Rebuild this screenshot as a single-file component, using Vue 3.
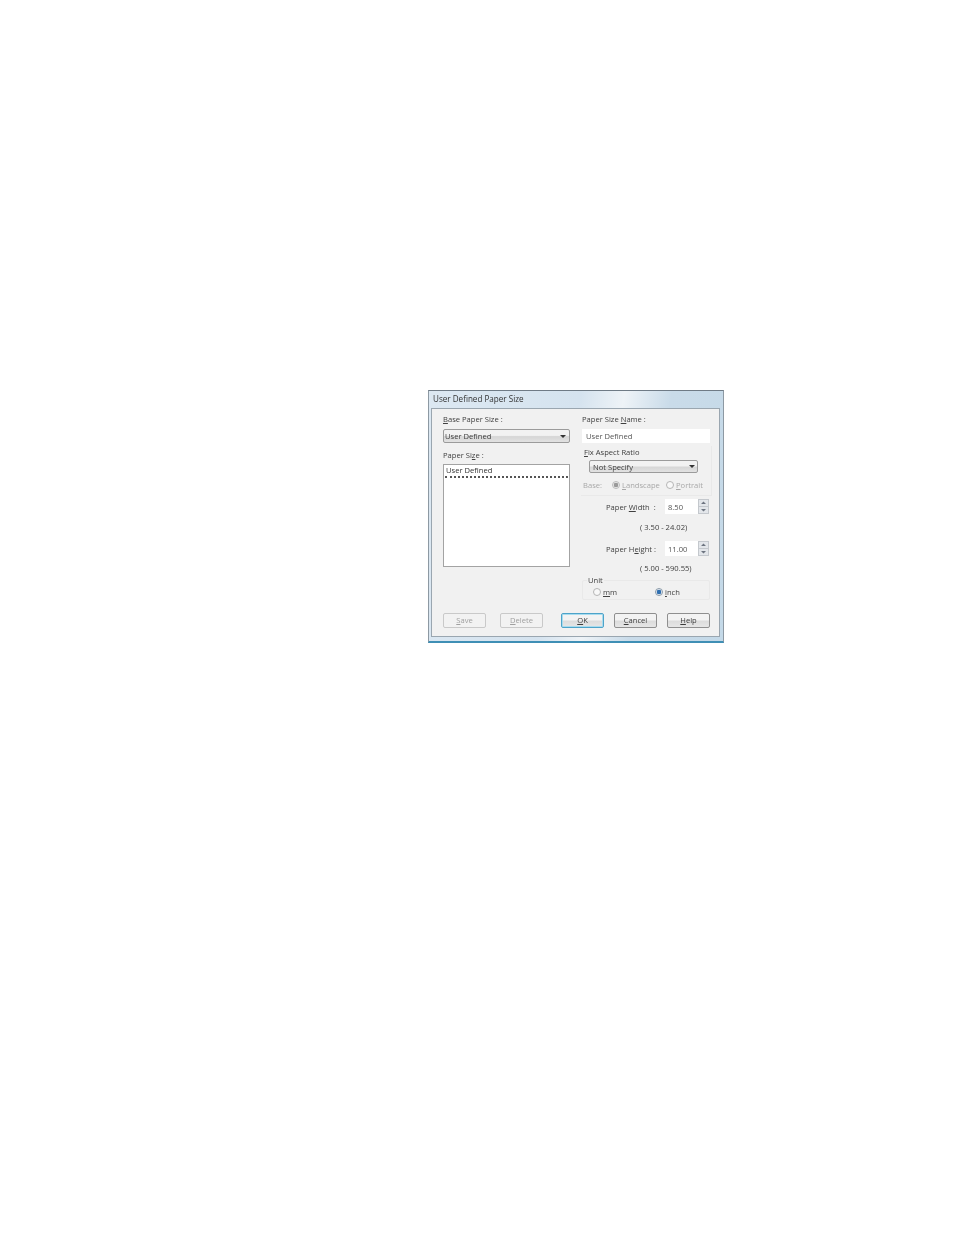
<script setup>
const leftButtons = [
  { key: "S", rest: "ave" },
  { key: "D", rest: "elete" },
];
const rightButtons = [
  { key: "O", rest: "K", main: true },
  { key: "C", rest: "ancel" },
  { key: "H", rest: "elp" },
];
</script>

<template>
  <div class="page">
    <div class="dialog">
      <div class="title">User Defined Paper Size</div>
      <div class="panel">
        <div class="columns">
          <div class="left">
            <div class="label"><u>B</u>ase Paper Size :</div>
            <div class="select base">
              <span>User Defined</span>
              <i class="arrow"></i>
            </div>
            <div class="label size-label">Paper Si<u>z</u>e :</div>
            <div class="listbox">
              <div class="list-item">User Defined</div>
            </div>
          </div>

          <div class="right">
            <div class="label">Paper Size <u>N</u>ame :</div>
            <div class="input name">User Defined</div>

            <div class="aspect">
              <div class="label legend"><u>F</u>ix Aspect Ratio</div>
              <div class="select ratio">
                <span>Not Specify</span>
                <i class="arrow"></i>
              </div>
              <div class="base-row">
                <span class="disabled base-text">Base:</span>
                <span class="radio-wrap disabled landscape">
                  <i class="radio on off"></i><span><u>L</u>andscape</span>
                </span>
                <span class="radio-wrap disabled">
                  <i class="radio off"></i><span><u>P</u>ortrait</span>
                </span>
              </div>
            </div>

            <div class="size-row width-row">
              <span class="size-name">Paper <u>W</u>idth &nbsp;:</span>
              <div class="input num">8.50</div>
              <div class="spin">
                <svg width="11" height="15" viewBox="0 0 11 15">
                  <rect x="0.5" y="0.5" width="10" height="7" fill="#e3e6ea" stroke="#c4c8cd" />
                  <rect x="0.5" y="7.5" width="10" height="7" fill="#e3e6ea" stroke="#c4c8cd" />
                  <path d="M5.5 2.5 8 5H3zM5.5 12.5 8 10H3z" fill="#6d7480" />
                </svg>
              </div>
            </div>
            <div class="range range-width">( 3.50 - 24.02)</div>

            <div class="size-row height-row">
              <span class="size-name">Paper H<u>e</u>ight :</span>
              <div class="input num">11.00</div>
              <div class="spin">
                <svg width="11" height="15" viewBox="0 0 11 15">
                  <rect x="0.5" y="0.5" width="10" height="7" fill="#e3e6ea" stroke="#c4c8cd" />
                  <rect x="0.5" y="7.5" width="10" height="7" fill="#e3e6ea" stroke="#c4c8cd" />
                  <path d="M5.5 2.5 8 5H3zM5.5 12.5 8 10H3z" fill="#6d7480" />
                </svg>
              </div>
            </div>
            <div class="range range-height">( 5.00 - 590.55)</div>

            <div class="unit">
              <div class="label unit-legend">Unit</div>
              <span class="radio-wrap mm">
                <i class="radio off"></i><span><u>m</u>m</span>
              </span>
              <span class="radio-wrap">
                <i class="radio on"></i><span><u>i</u>nch</span>
              </span>
            </div>
          </div>
        </div>

        <div class="buttons">
          <div class="group left-group">
            <button v-for="b in leftButtons" :key="b.key" class="btn" disabled>
              <u>{{ b.key }}</u>{{ b.rest }}
            </button>
          </div>
          <div class="group">
            <button v-for="b in rightButtons" :key="b.key" class="btn active" :class="{ main: b.main }">
              <u>{{ b.key }}</u>{{ b.rest }}
            </button>
          </div>
        </div>
      </div>
    </div>
  </div>
</template>

<style scoped>
.page {
  width: 954px;
  height: 1235px;
  padding: 390px 0 0 428px;
  box-sizing: border-box;
  background: #fff;
  font-family: "Open Sans", "Liberation Sans", sans-serif;
  font-size: 7.6px;
  color: #404040;
}
.dialog {
  width: 296px;
  height: 253px;
  box-sizing: border-box;
  padding: 0 3px 4px 2px;
  display: flex;
  flex-direction: column;
  border: 1px solid #8d99a3;
  border-top-color: #6f7b86;
  border-bottom: 2px solid #3f8fb5;
  background: linear-gradient(100deg, #dce8f2 0%, #d5e3ef 45%, #eef3f7 58%, #c9dbe9 72%, #c4d9e8 100%);
  filter: blur(0.5px);
}
.title {
  height: 17px;
  line-height: 16px;
  padding-left: 2px;
  font-size: 8.1px;
  color: #333;
}
.panel {
  flex: 1;
  padding: 4px 9px 8px 11px;
  display: flex;
  flex-direction: column;
  justify-content: space-between;
  background: #f1f1f1;
  border: 1px solid #9aa6b0;
}
.columns {
  display: flex;
  gap: 12px;
}
.left {
  width: 127px;
}
.right {
  width: 128px;
}
.label {
  height: 12px;
  line-height: 12px;
  white-space: nowrap;
}
.select {
  height: 12px;
  line-height: 12px;
  padding: 0 1px;
  display: flex;
  align-items: center;
  justify-content: space-between;
  border: 1px solid #9b9b9b;
  border-radius: 2px;
  background: linear-gradient(#f2f2f2 45%, #d6d6d6 55%, #e2e2e2);
  color: #3c3c3c;
}
.base {
  margin-top: 4px;
}
.arrow {
  width: 0;
  height: 0;
  margin-right: 2px;
  border: 3px solid transparent;
  border-top: 3px solid #333;
  border-bottom: 0;
}
.size-label {
  margin-top: 6px;
}
.listbox {
  height: 100px;
  margin-top: 3px;
  padding: 0 1px 1px;
  border: 1px solid #a3a3a3;
  background: #fff;
}
.list-item {
  height: 11px;
  line-height: 10px;
  padding-left: 1px;
  border-bottom: 2px dotted #555;
  color: #333;
}
.input {
  background: #fff;
  color: #555;
  line-height: 14px;
  height: 14px;
}
.name {
  margin-top: 4px;
  padding-left: 4px;
}
.aspect {
  height: 49px;
  margin: 3px -2px 0 -1px;
  padding: 0 0 0 8px;
  border: 1px solid #e9e9e9;
  border-top: 0;
  border-left: 0;
}
.legend {
  margin-left: -5px;
}
.ratio {
  width: 106px;
  box-sizing: content-box;
  height: 11px;
  margin-top: 2px;
  padding: 0 0 0 1px;
}
.ratio span {
  padding-left: 2px;
}
.base-row {
  display: flex;
  align-items: center;
  margin: 6px 0 0 -8px;
  height: 12px;
}
.disabled {
  color: #a8a8a8;
}
.base-text {
  width: 31px;
  padding-left: 2px;
  box-sizing: border-box;
}
.landscape {
  width: 54px;
}
.radio-wrap {
  display: inline-flex;
  align-items: center;
  gap: 2px;
}
.radio {
  width: 6px;
  height: 6px;
  border-radius: 50%;
  border: 1px solid #b5b5b5;
  background: #f8f8f8;
}
.radio.on {
  background: radial-gradient(circle, #2f6fb0 0 2px, #e8eef4 2.6px);
  border-color: #8a99a8;
}
.radio.on.off {
  background: radial-gradient(circle, #9a9a9a 0 2px, #eee 2.6px);
  border-color: #bbb;
}
.size-row {
  display: flex;
  align-items: center;
  height: 15px;
}
.width-row {
  margin-top: 3px;
}
.height-row {
  margin-top: 8px;
}
.size-name {
  width: 83px;
  padding-left: 24px;
  box-sizing: border-box;
  white-space: nowrap;
}
.num {
  width: 33px;
  height: 15px;
  line-height: 16px;
  padding-left: 3px;
  box-sizing: border-box;
}
.spin {
  height: 15px;
  width: 11px;
}
.spin svg {
  display: block;
}
.range {
  height: 12px;
  line-height: 12px;
  padding-left: 58px;
}
.range-width {
  margin-top: 7px;
}
.range-height {
  margin-top: 6px;
}
.unit {
  height: 20px;
  margin-top: 6px;
  padding: 3px 0 0 10px;
  box-sizing: border-box;
  display: flex;
  align-items: center;
  position: relative;
  border: 1px solid #e9e9e9;
  border-radius: 2px;
}
.unit-legend {
  position: absolute;
  left: 4px;
  top: -7px;
  padding: 0 1px;
  background: #f1f1f1;
}
.mm {
  width: 62px;
}
.buttons {
  display: flex;
  justify-content: space-between;
}
.group {
  display: flex;
  gap: 10px;
}
.left-group {
  gap: 14px;
}
.btn {
  width: 43px;
  height: 15px;
  padding: 0;
  font: inherit;
  text-align: center;
  line-height: 13px;
  border: 1px solid #c9c9c9;
  border-radius: 2px;
  background: #f2f2f2;
  color: #a0a0a0;
}
.active {
  border-color: #8f8f8f;
  background: linear-gradient(#f3f3f3 45%, #dcdcdc 55%, #e6e6e6);
  color: #3c3c3c;
}
.main {
  border: 1px solid #4da3c9;
  box-shadow: inset 0 0 0 1px #a8dcef;
}
</style>

<style>
html,
body {
  margin: 0;
  background: #fff;
}
</style>
